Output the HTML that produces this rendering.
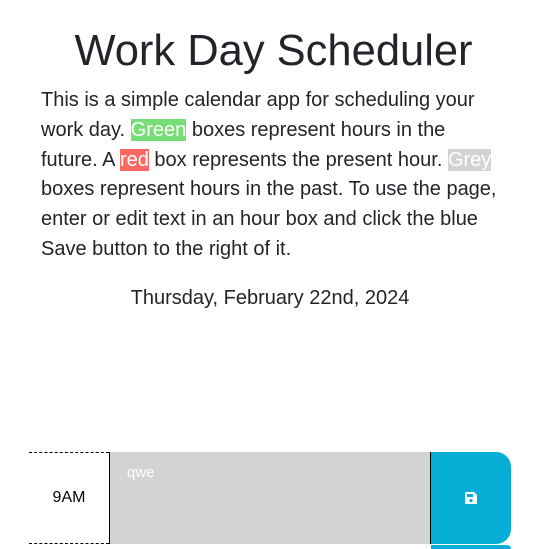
<html><head><style>
body{margin:0;width:547px;height:547px;overflow:hidden;background:#fff;font-family:"Liberation Sans",Arial,sans-serif;color:#212529}
h1{position:absolute;top:28px;left:0;width:547px;text-align:center;margin:0;font-size:43.5px;font-weight:400;line-height:46px}
p{position:absolute;left:41px;top:86px;width:462px;margin:0;font-size:20px;line-height:29.8px}
.g{background:#77dd77;color:#fff}.r{background:#ff6961;color:#fff}.y{background:#d3d3d3;color:#fff}
.d{position:absolute;top:287px;width:540px;text-align:center;font-size:20px}
.hr{position:absolute;left:29px;top:452px;width:80px;height:92px;border-top:1px dashed #000;border-bottom:1px dashed #000;box-sizing:border-box;font-size:16px;line-height:90px;text-align:center;color:#000}
.ta{position:absolute;left:109px;top:452px;width:322px;height:92px;background:#d3d3d3;border-left:1px solid #000;border-right:1px solid #000;box-sizing:border-box;color:#fff;font-size:15px;padding:12px 0 0 17px}
.b{position:absolute;left:431px;top:452px;width:80px;height:92px;background:#06aed5;border-radius:0 15px 15px 0}
.b2{position:absolute;left:431px;top:545px;width:80px;height:4px;background:#06aed5;border-radius:0 15px 0 0}
</style></head><body>
<h1>Work Day Scheduler</h1>
<p>This is a simple calendar app for scheduling your work day. <span class="g">Green</span> boxes represent hours in the future. A <span class="r">red</span> box represents the present hour. <span class="y">Grey</span> boxes represent hours in the past. To use the page, enter or edit text in an hour box and click the blue Save button to the right of it.</p>
<div class="d">Thursday, February 22nd, 2024</div>
<div class="hr">9AM</div>
<div class="ta">qwe</div>
<div class="b"><svg style="position:absolute;left:33px;top:39px" width="14" height="14" viewBox="0 0 14 14"><path d="M1 2a1 1 0 0 1 1-1h8l3 3v8a1 1 0 0 1-1 1H2a1 1 0 0 1-1-1z" fill="#fff"/><rect x="3" y="3" width="6" height="3" fill="#06aed5"/><circle cx="7" cy="9.5" r="1.6" fill="#06aed5"/></svg></div>
<div class="b2"></div>
</body></html>
